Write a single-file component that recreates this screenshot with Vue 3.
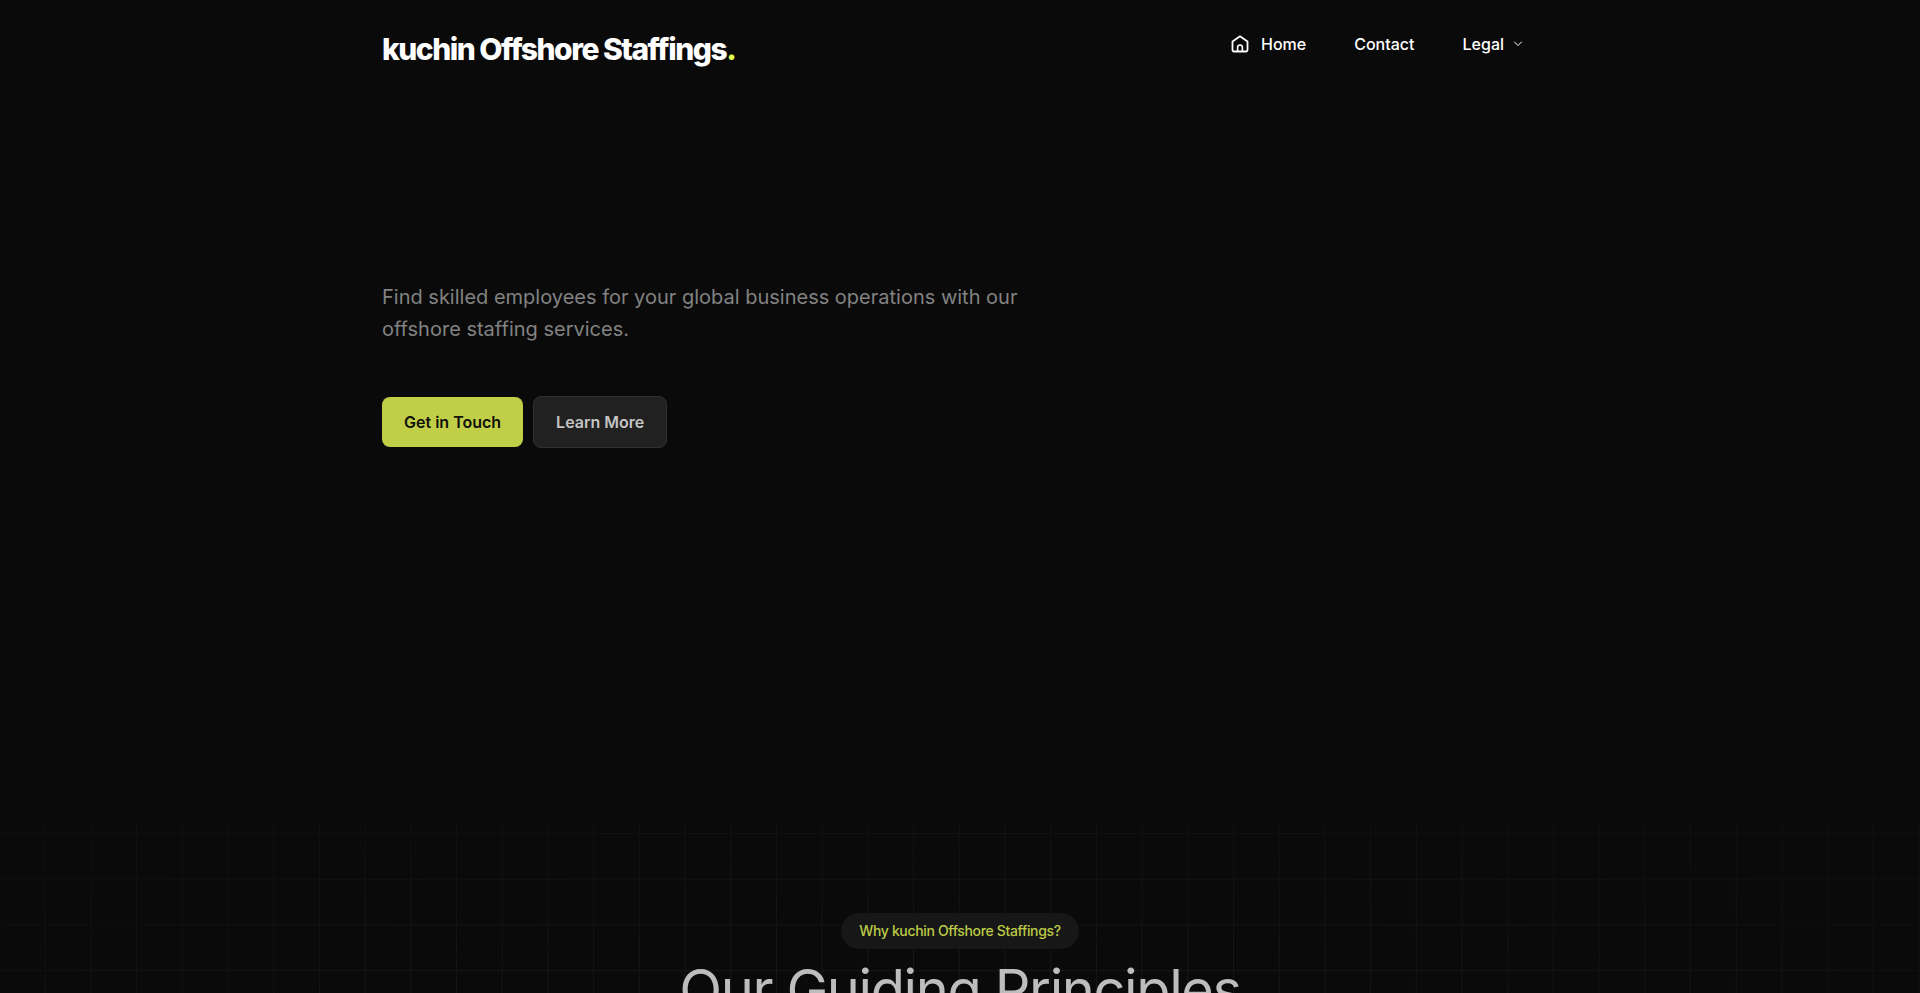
<script setup>
import { ref } from 'vue'

const legalOpen = ref(false)

const legalLinks = ['Privacy Policy', 'Terms of Service']
</script>

<template>
  <div class="page">
    <header class="container header">
      <a href="#" class="logo">kuchin Offshore Staffings<span class="dot">.</span></a>

      <nav class="nav">
        <a href="#" class="nav-link">
          <svg class="home-icon" viewBox="0 0 18 18" fill="none" stroke="currentColor" stroke-width="1.8" stroke-linejoin="round" stroke-linecap="round" aria-hidden="true">
            <path d="M1.500 6.500 9 1.300l7.500 5.200v8.500a1.500 1.500 0 0 1-1.500 1.500H3A1.500 1.500 0 0 1 1.500 15z" />
            <path d="M6.600 16v-3.600a2.400 2.400 0 0 1 4.800 0V16" stroke-width="1.600" />
          </svg>
          Home
        </a>
        <a href="#contact" class="nav-link">Contact</a>
        <div class="dropdown">
          <button type="button" class="nav-link" :aria-expanded="legalOpen" @click="legalOpen = !legalOpen">
            Legal
            <svg class="chevron" viewBox="0 0 10 10" fill="none" stroke="currentColor" stroke-linecap="round" stroke-linejoin="round" aria-hidden="true">
              <path d="M1.500 3 5 6.500 8.500 3" />
            </svg>
          </button>
          <div v-if="legalOpen" class="menu">
            <a v-for="link in legalLinks" :key="link" href="#">{{ link }}</a>
          </div>
        </div>
      </nav>
    </header>

    <main>
      <section class="container hero">
        <p class="lead">
          Find skilled employees for your global business operations with our
          offshore staffing services.
        </p>
        <div class="actions">
          <button type="button" class="btn btn-primary">Get in Touch</button>
          <button type="button" class="btn btn-secondary">Learn More</button>
        </div>
      </section>

      <section class="principles">
        <span class="badge">Why kuchin Offshore Staffings?</span>
        <h2>Our Guiding Principles</h2>
      </section>
    </main>
  </div>
</template>

<style>
body {
  margin: 0;
  background: #0a0a0a;
}
</style>

<style scoped>
.page {
  display: flex;
  flex-direction: column;
  height: 100vh;
  overflow: hidden;
  background: #0a0a0a;
  color: #fff;
  font-family: Inter, "Liberation Sans", sans-serif;
}

.container {
  width: 100%;
  max-width: 1156px;
  margin: 0 auto;
  box-sizing: border-box;
}

.header {
  display: flex;
  justify-content: space-between;
  align-items: flex-start;
  padding: 24px 15px 0 0;
}

.logo {
  color: #fff;
  font-size: 30px;
  font-weight: 800;
  line-height: 50px;
  letter-spacing: -0.05em;
  text-decoration: none;
}

.dot {
  color: #e4ff4f;
}

.nav {
  display: flex;
  gap: 48px;
}

.nav-link {
  display: flex;
  align-items: center;
  padding: 0;
  border: 0;
  background: none;
  color: #fff;
  font-family: inherit;
  font-size: 16px;
  font-weight: 500;
  line-height: 40px;
  text-decoration: none;
  cursor: pointer;
}

.home-icon {
  width: 18px;
  height: 18px;
  margin-right: 12px;
}

.chevron {
  width: 10px;
  height: 10px;
  margin-left: 9px;
}

.dropdown {
  position: relative;
}

.menu {
  position: absolute;
  top: 100%;
  right: 0;
  display: grid;
  gap: 8px;
  padding: 12px;
  border-radius: 8px;
  background: #1c1c1c;
  white-space: nowrap;
}

.menu a {
  color: #ccc;
  text-decoration: none;
}

.hero {
  padding: 207px 0 376px;
}

.lead {
  max-width: 672px;
  margin: 0 0 51px;
  color: #828282;
  font-size: 20px;
  line-height: 32px;
}

.actions {
  display: flex;
  align-items: center;
  gap: 10px;
}

.btn {
  padding: 0 22px;
  border: 0;
  border-radius: 8px;
  font-family: inherit;
  font-size: 16px;
  font-weight: 600;
  line-height: 50px;
  cursor: pointer;
}

.btn-primary {
  background: #c1ce48;
  color: #10110a;
}

.btn-secondary {
  border: 1px solid #303030;
  background: #212121;
  color: #c4c4c4;
}

.principles {
  position: relative;
  display: flex;
  flex-direction: column;
  align-items: center;
  padding: 89px 0 120px;
}

/* faint square grid, 42 cells across, fading out towards the top corners */
.principles::before {
  content: "";
  position: absolute;
  inset: 0;
  background-image:
    linear-gradient(to left, #1e1e1e 1px, transparent 1px),
    linear-gradient(to bottom, #1e1e1e 1px, transparent 1px);
  background-size: calc(100vw / 42) calc(100vw / 42);
  background-position: 0 9px;
  mask-image: radial-gradient(ellipse 64% 110% at 50% 100%, #000 0%, rgba(0, 0, 0, 0.3) 100%);
}

.badge {
  position: relative;
  padding: 0 18px;
  border-radius: 18px;
  background: #171717;
  color: #bccb45;
  font-size: 14px;
  font-weight: 500;
  line-height: 36px;
  letter-spacing: -0.025em;
}

h2 {
  position: relative;
  margin: 5px 0 0;
  color: #bdbdbd;
  font-size: 56px;
  font-weight: 400;
  line-height: 72px;
  letter-spacing: -0.025em;
}
</style>
